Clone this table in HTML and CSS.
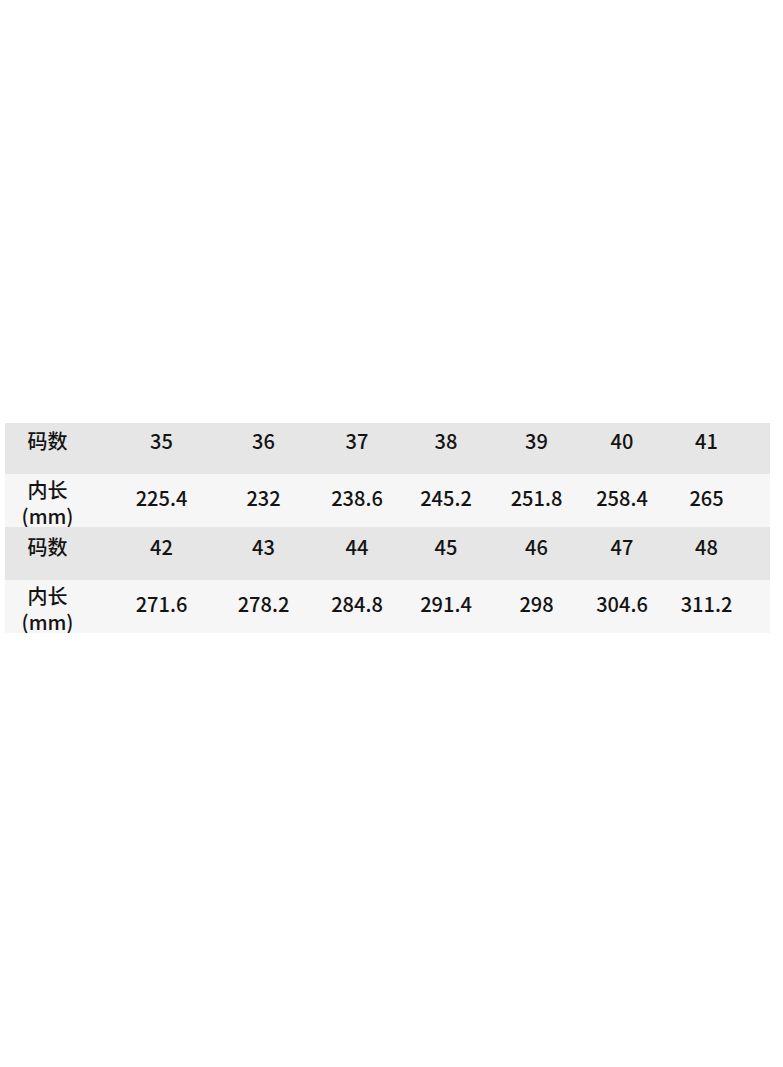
FILE: index.html
```html
<!DOCTYPE html>
<html lang="zh">
<head>
<meta charset="utf-8">
<title>尺码表</title>
<link rel="stylesheet" href="styles.css">
</head>
<body>
<div class="page">
  <div class="size-table">
    <div class="row row-size row-size-a">
      <div class="cell">码数</div>
      <div class="cell">35</div>
      <div class="cell">36</div>
      <div class="cell">37</div>
      <div class="cell">38</div>
      <div class="cell">39</div>
      <div class="cell">40</div>
      <div class="cell">41</div>
    </div>
    <div class="row row-len">
      <div class="cell label"><span>内长</span><span>(mm)</span></div>
      <div class="cell num">225.4</div>
      <div class="cell num">232</div>
      <div class="cell num">238.6</div>
      <div class="cell num">245.2</div>
      <div class="cell num">251.8</div>
      <div class="cell num">258.4</div>
      <div class="cell num">265</div>
    </div>
    <div class="row row-size row-size-b">
      <div class="cell">码数</div>
      <div class="cell">42</div>
      <div class="cell">43</div>
      <div class="cell">44</div>
      <div class="cell">45</div>
      <div class="cell">46</div>
      <div class="cell">47</div>
      <div class="cell">48</div>
    </div>
    <div class="row row-len">
      <div class="cell label"><span>内长</span><span>(mm)</span></div>
      <div class="cell num">271.6</div>
      <div class="cell num">278.2</div>
      <div class="cell num">284.8</div>
      <div class="cell num">291.4</div>
      <div class="cell num">298</div>
      <div class="cell num">304.6</div>
      <div class="cell num">311.2</div>
    </div>
  </div>
</div>
</body>
</html>
```

FILE: styles.css
```css
html, body {
  margin: 0;
  padding: 0;
  background: #ffffff;
}

.page {
  padding: 423px 13px 0 5px;
  font-family: "Noto Sans CJK SC", "Noto Sans", sans-serif;
  font-size: 20px;
  font-weight: 500;
  line-height: 25px;
  color: #141414;
}

.size-table {
  display: flex;
  flex-direction: column;
}

.row {
  display: grid;
  grid-template-columns: 85px 143px 61px 126px 52px 129px 42px 127px;
}

.cell {
  display: flex;
  flex-direction: column;
  align-items: center;
  white-space: nowrap;
}

.row-size {
  background: #e6e6e6;
  align-items: start;
  box-sizing: border-box;
  height: 53px;
}

.row-size-a {
  height: 51px;
  padding-top: 5px;
}

.row-size-b {
  padding-top: 7px;
}

.row-len {
  background: #f6f6f6;
  align-items: center;
  height: 53px;
}

.label {
  line-height: 26px;
  padding-top: 3px;
}

.num {
  padding-bottom: 9px;
}
```
